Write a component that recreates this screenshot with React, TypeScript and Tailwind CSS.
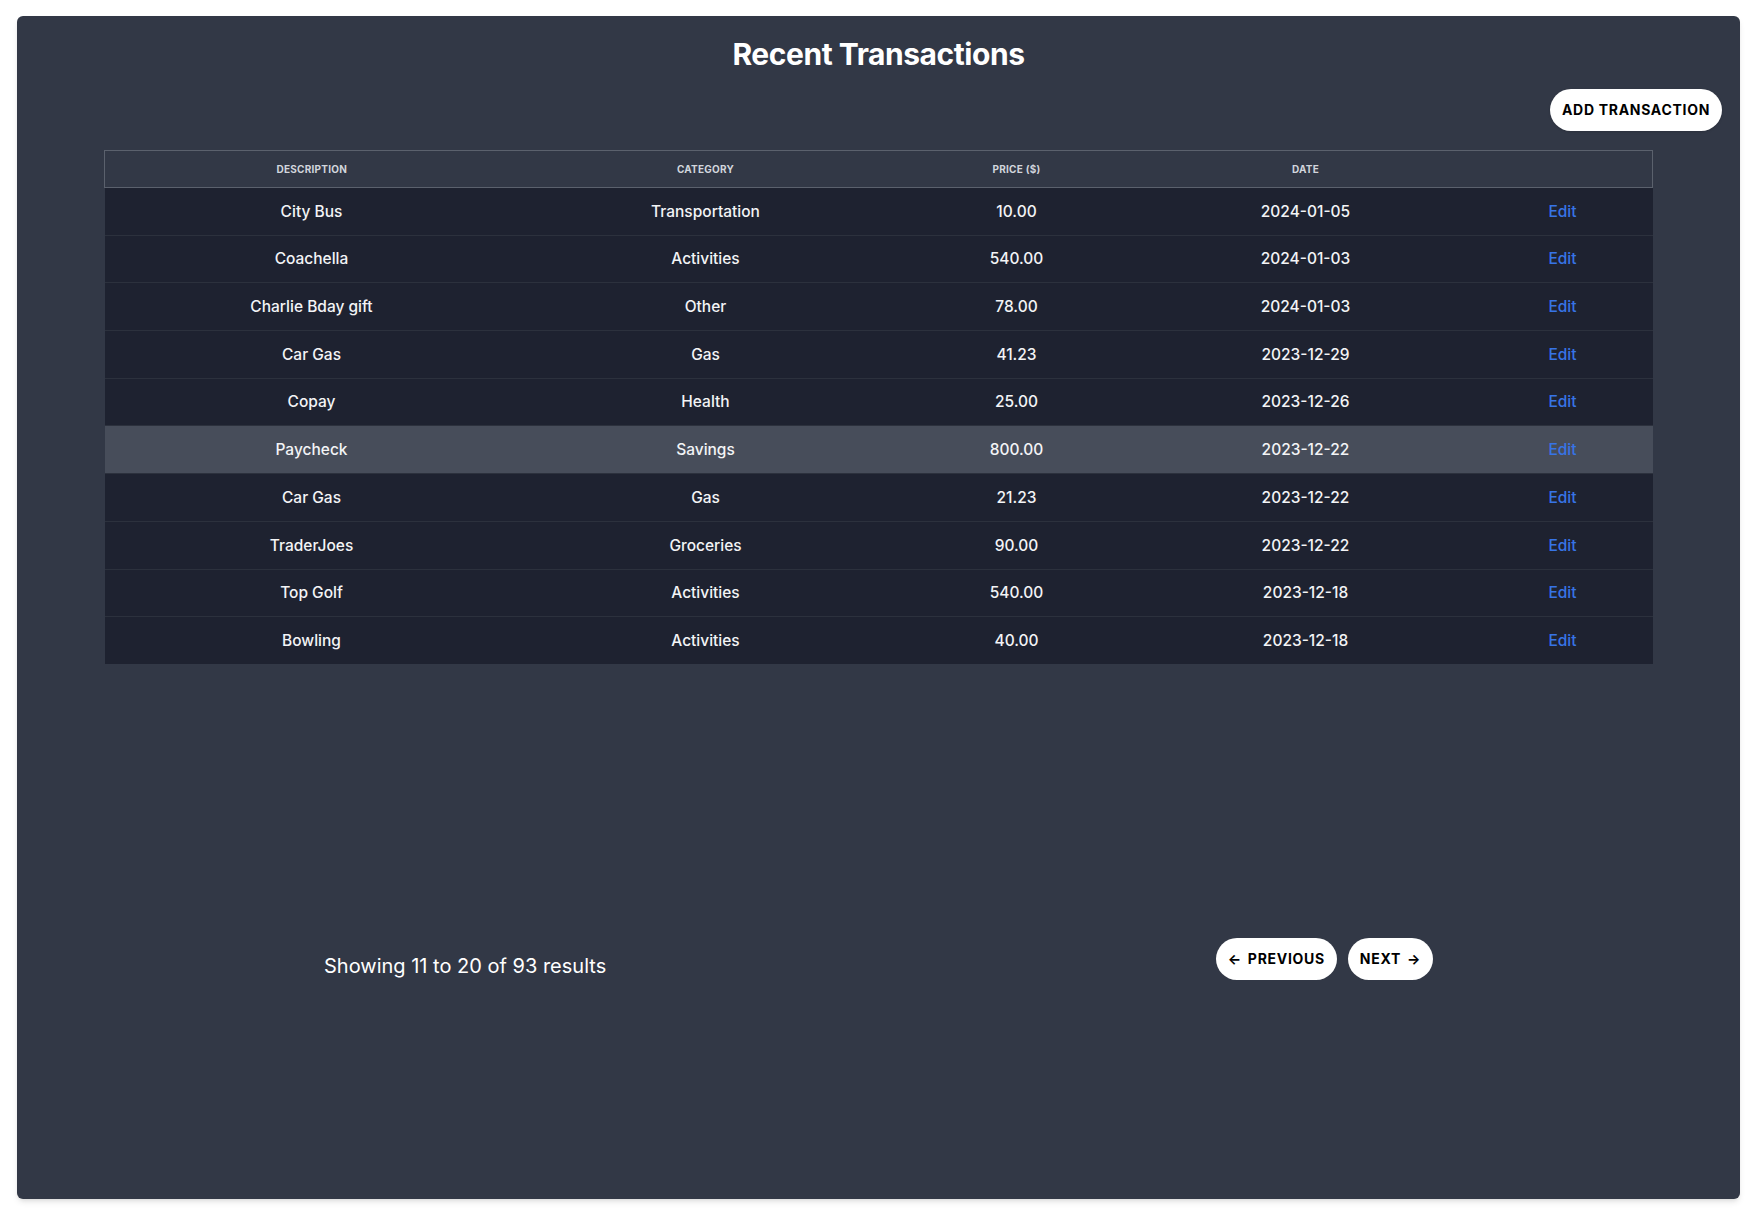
import React from 'react';

type Txn = {
  description: string;
  category: string;
  price: string;
  date: string;
};

const transactions: Txn[] = [
  { description: 'City Bus', category: 'Transportation', price: '10.00', date: '2024-01-05' },
  { description: 'Coachella', category: 'Activities', price: '540.00', date: '2024-01-03' },
  { description: 'Charlie Bday gift', category: 'Other', price: '78.00', date: '2024-01-03' },
  { description: 'Car Gas', category: 'Gas', price: '41.23', date: '2023-12-29' },
  { description: 'Copay', category: 'Health', price: '25.00', date: '2023-12-26' },
  { description: 'Paycheck', category: 'Savings', price: '800.00', date: '2023-12-22' },
  { description: 'Car Gas', category: 'Gas', price: '21.23', date: '2023-12-22' },
  { description: 'TraderJoes', category: 'Groceries', price: '90.00', date: '2023-12-22' },
  { description: 'Top Golf', category: 'Activities', price: '540.00', date: '2023-12-18' },
  { description: 'Bowling', category: 'Activities', price: '40.00', date: '2023-12-18' },
];

const App: React.FC = () => {
  const highlighted = 5;

  return (
    <div className="min-h-screen bg-white p-4 pl-[17px] font-['Inter',sans-serif]">
      <div className="flex h-[1183px] w-[1723px] flex-col rounded-md bg-[#323846] shadow-md">
        <h1 className="pt-5 text-center text-3xl font-bold tracking-[-0.015em] text-white">
          Recent Transactions
        </h1>

        <div className="mt-[17px] flex justify-end pr-[18px]">
          <button className="rounded-full bg-white px-3 py-[11px] text-sm font-bold uppercase tracking-wider text-black shadow">
            Add Transaction
          </button>
        </div>

        <table className="ml-[87px] mt-[19px] w-[1548px] table-fixed border-collapse">
          <colgroup>
            <col className="w-[414px]" />
            <col className="w-[374px]" />
            <col className="w-[248px]" />
            <col className="w-[330px]" />
            <col className="w-[182px]" />
          </colgroup>
          <thead>
            <tr className="h-[37px] border border-[#5b616d] bg-[#323846]">
              <th className="text-center text-[10px] font-bold uppercase tracking-wide text-gray-300">Description</th>
              <th className="text-center text-[10px] font-bold uppercase tracking-wide text-gray-300">Category</th>
              <th className="text-center text-[10px] font-bold uppercase tracking-wide text-gray-300">Price ($)</th>
              <th className="text-center text-[10px] font-bold uppercase tracking-wide text-gray-300">Date</th>
              <th />
            </tr>
          </thead>
          <tbody>
            {transactions.map((t, i) => (
              <tr
                key={i}
                className={`h-[47.7px] border-b border-[#2c313d] text-[15.5px] font-medium text-gray-100 ${
                  i === highlighted ? 'bg-[#474d5a]' : 'bg-[#1e2230]'
                } ${i === transactions.length - 1 ? 'border-b-0' : ''}`}
              >
                <td className="text-center">{t.description}</td>
                <td className="text-center">{t.category}</td>
                <td className="text-center">{t.price}</td>
                <td className="text-center">{t.date}</td>
                <td className="pl-[2px] text-center">
                  <a href="#" className="text-[#3774e6]">
                    Edit
                  </a>
                </td>
              </tr>
            ))}
          </tbody>
        </table>

        <div className="mt-[274px] flex items-center justify-between px-[307px]">
          <p className="pt-[14px] text-xl text-white">Showing 11 to 20 of 93 results</p>
          <div className="flex gap-[11px]">
            <button className="flex items-center gap-1.5 rounded-full bg-white px-3 py-[11px] text-sm font-bold uppercase tracking-wider text-black">
              <span aria-hidden>←</span>
              Previous
            </button>
            <button className="flex items-center gap-1.5 rounded-full bg-white px-3 py-[11px] text-sm font-bold uppercase tracking-wider text-black">
              Next
              <span aria-hidden>→</span>
            </button>
          </div>
        </div>
      </div>
    </div>
  );
};

export default App;
